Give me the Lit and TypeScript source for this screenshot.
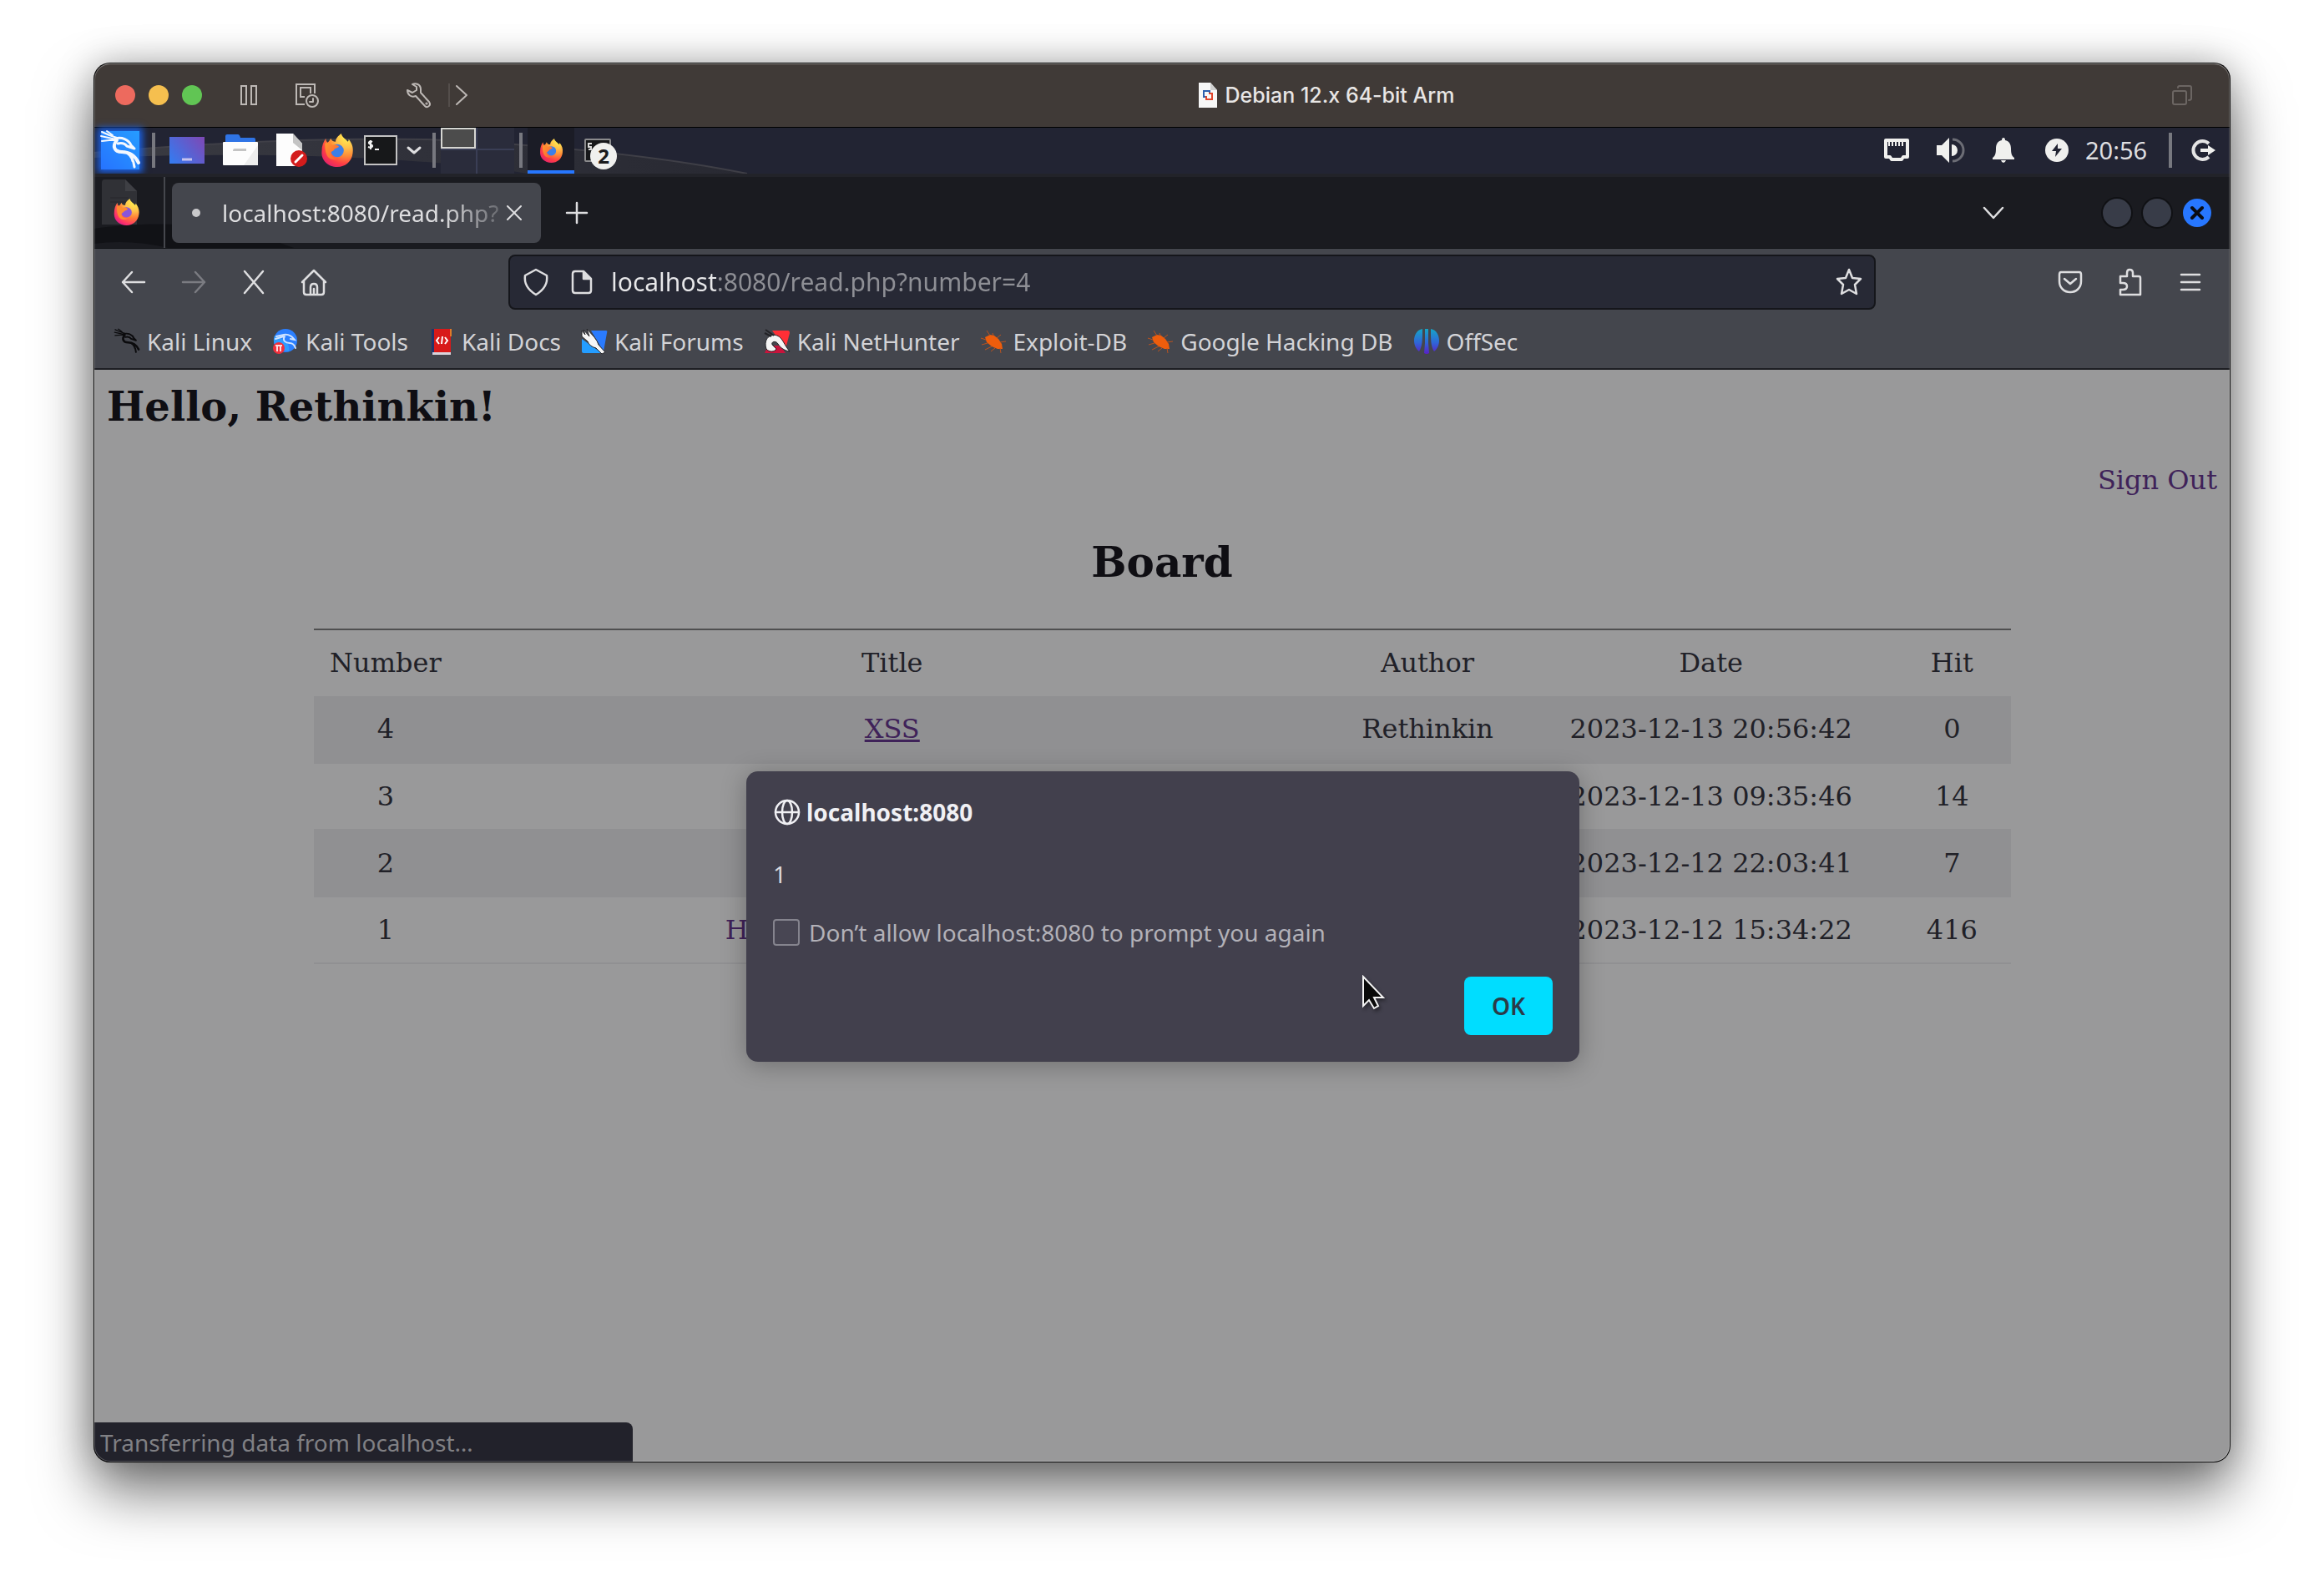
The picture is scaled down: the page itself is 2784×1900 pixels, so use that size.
import { LitElement, html, css, svg } from "lit";
import { customElement } from "lit/decorators.js";

const line = (w: number, h: number, body: unknown, sw = 2) => html`<svg
  class="ic" width=${w} height=${h} viewBox="0 0 ${w} ${h}" fill="none"
  stroke="currentColor" stroke-width=${sw} stroke-linecap="round" stroke-linejoin="round"
  aria-hidden="true">${body}</svg>`;

const dragon = svg`
  <path d="M1 1 L10 5 L19 8 M0 6 L9 8 L18 10 M1 12 L10 11 L18 11 M7 0 L14 5" stroke-width="2"/>
  <path d="M17 9 C25 7 33 10 36 17 L40 21 L31 18 C28 14 24 14 20 15" stroke-width="3"/>
  <path d="M19 11 C13 18 16 25 25 25 C34 25 41 30 45 38" stroke-width="4"/>
  <path d="M31 26 C37 30 39 35 40 43 M36 29 L38 36" stroke-width="3"/>`;

const firefox = (size: number, id: string, core: string) => html`<svg class="ic" width=${size} height=${size} viewBox="0 0 40 41" aria-hidden="true">
  <defs>
    <radialGradient id="${id}a" cx="0.8" cy="0.1" r="1.05">
      <stop offset="0" stop-color="#fff44f"/><stop offset="0.3" stop-color="#ffc24a"/>
      <stop offset="0.55" stop-color="#ff8a36"/><stop offset="0.78" stop-color="#ff3d45"/><stop offset="1" stop-color="#e0206f"/>
    </radialGradient>
    <linearGradient id="${id}b" x1="0" y1="0" x2="1" y2="1">
      <stop offset="0" stop-color="#ff9a2e"/><stop offset="1" stop-color="#ff5a36"/>
    </linearGradient>
  </defs>
  <path fill="url(#${id}a)" d="M25 0 C26 5 30 6 33 10 C34 9 34 8 34 7 C38 12 40 17 39 24 C38 34 30 41 20 41 C9 41 0 33 1 22 C1 15 3 10 6 6 C6 9 7 10 8 11 C10 10 11 8 12 6 C13 9 15 10 18 10 C18 6 21 3 25 0 Z"/>
  <circle cx="20" cy="21" r="8" fill=${core}/>
  <path fill="url(#${id}b)" d="M5 12 C9 10 12 12 14 14 C17 13 20 14 22 16 C21 18 17 18 16 20 C15 22 12 22 12 24 C13 29 18 31 22 30 C17 34 9 32 7 26 C5 21 5 16 5 12 Z"/>
</svg>`;

const spider = html`<svg class="ic" width="32" height="32" viewBox="0 0 32 32" aria-hidden="true">
  <path d="M6 11 L12 8 L17 9 L22 13 L26 19 L27 25 L21 25 L14 22 L8 17 Z" fill="#ee5d0c"/>
  <path d="M12 9 L8 3 M16 9 L15 6 M20 12 L25 8 M24 17 L31 16 M7 14 L1 12 M9 18 L2 20 M14 22 L6 26 M18 24 L13 28 M24 24 L25 30" stroke="#b9521f" stroke-width="1" fill="none"/>
</svg>`;

const bookmarks = [
  { label: "Kali Linux", icon: html`<svg class="ic" width="32" height="32" viewBox="-2 -2 50 50" fill="none" stroke="#0b0b0d" stroke-linecap="round" stroke-linejoin="round" aria-hidden="true">${dragon}</svg>` },
  { label: "Kali Tools", icon: html`<svg class="ic" width="32" height="32" viewBox="0 0 32 32" fill="none" aria-hidden="true">
      <circle cx="16" cy="15" r="14" fill="#2a7fff"/><path d="M3 9 A14 14 0 0 0 8 26 L20 28 A14 14 0 0 0 14 14 Z" fill="#2e9bff"/>
      <path d="M5 10 L14 8 M4 13 L14 10 M14 8 C20 7 24 10 27 14 L22 13 M15 10 C12 15 16 18 21 18 C25 18 27 21 28 24" stroke="#cfe3ff" stroke-width="2" stroke-linecap="round"/>
      <circle cx="8" cy="24" r="7" fill="#f0303c"/><path d="M4 21 H12 M6 21 V28 M10 21 V28" stroke="#ffd9dc" stroke-width="2"/>
    </svg>` },
  { label: "Kali Docs", icon: html`<svg class="ic" width="32" height="32" viewBox="0 0 32 32" fill="none" aria-hidden="true">
      <path d="M4 1 H7 V31 H4 Z" fill="#24336b"/><path d="M7 1 H27 V29 H7 Z" fill="#d81a1a"/><path d="M26 1 H28 V10 H26 Z" fill="#e07a28"/>
      <path d="M5 29 H27 V32 H5 Z" fill="#d8d4dc"/>
      <path d="M13 11 L10 15 L13 19 M17 10 L16 19 M20 11 L23 15 L20 19" stroke="#fff" stroke-width="2"/>
    </svg>` },
  { label: "Kali Forums", icon: html`<svg class="ic" width="32" height="32" viewBox="0 0 32 32" fill="none" aria-hidden="true">
      <path d="M12 3 H30 Q32 3 31 6 L27 28 Z" fill="#2a7bff"/><path d="M1 13 L25 30 H3 Q1 30 1 28 Z" fill="#249dff"/>
      <path d="M1 3 L5 8 L3 2 L10 10 L7 1 L16 11 Q20 16 21 20 L29 29 L25 31 L18 24 Q10 22 8 16 L1 10 Z" fill="#f6f6f6" stroke="#26262a" stroke-width="1"/>
    </svg>` },
  { label: "Kali NetHunter", icon: html`<svg class="ic" width="32" height="32" viewBox="0 0 32 32" fill="none" aria-hidden="true">
      <path d="M10 3 H29 Q31 3 31 6 L26 25 Z" fill="#ff2f36"/><path d="M1 30 L5 21 H20 L26 30 Z" fill="#c8143c"/>
      <path d="M3 25 C-1 13 8 6 16 9 C23 12 24 20 31 28 C25 27 20 24 17 19 C14 14 7 17 11 21 L15 25 C13 29 6 29 3 25 Z" fill="#f4f4f4" stroke="#222226" stroke-width="1"/>
      <path d="M2 2 L12 9 M1 6 L9 10" stroke="#222226" stroke-width="2"/>
    </svg>` },
  { label: "Exploit-DB", icon: spider },
  { label: "Google Hacking DB", icon: spider },
  { label: "OffSec", icon: html`<svg class="ic" width="32" height="32" viewBox="0 0 32 32" aria-hidden="true">
      <defs><linearGradient id="os" x1="0" y1="0" x2="0" y2="1" gradientUnits="objectBoundingBox"><stop offset="0" stop-color="#16a6c6"/><stop offset="0.55" stop-color="#2f66d8"/><stop offset="1" stop-color="#5a1fc8"/></linearGradient></defs>
      <path fill="url(#os)" d="M11 1 C4 2 1 9 1 15 C1 21 4 26 7 28 C11 22 11 14 11 1 Z M21 1 C28 2 31 9 31 15 C31 21 28 26 25 28 C21 22 21 14 21 1 Z M14 1 H18 V18 L19 30 Q16 32 13 30 L14 18 Z"/>
    </svg>` },
];

const posts = [
  { n: 4, title: "XSS", author: "Rethinkin", date: "2023-12-13 20:56:42", hit: 0 },
  { n: 3, title: "", author: "", date: "2023-12-13 09:35:46", hit: 14 },
  { n: 2, title: "", author: "", date: "2023-12-12 22:03:41", hit: 7 },
  { n: 1, title: "H", author: "", date: "2023-12-12 15:34:22", hit: 416 },
];

@customElement("app-root")
export class AppRoot extends LitElement {
  static styles = css`
    :host { display: block; background: #fff; }
    * { box-sizing: border-box; }
    button { background: none; border: 0; padding: 0; margin: 0; color: inherit; font: inherit; display: flex; align-items: center; justify-content: center; flex: none; }
    .ic { display: block; flex: none; overflow: visible; }
    .desk { min-height: 100vh; padding: 75px 112px 148px; display: flex; }
    .window {
      position: relative; flex: 1; min-width: 0; display: flex; flex-direction: column; border-radius: 20px;
      box-shadow: 0 36px 68px rgba(0,0,0,.52), 0 0 44px rgba(0,0,0,.26);
      font-family: "Noto Sans", "Open Sans", sans-serif; color: #dedee0;
    }
    .window::after { content: ""; position: absolute; inset: 0; border-radius: 20px; pointer-events: none;
      box-shadow: inset 0 0 0 1px #0a0a0a, inset 0 0 0 2px rgba(255,255,255,.24), inset 0 2px 1px rgba(255,255,255,.24); }

    .titlebar { height: 78px; background: #403a37; border-bottom: 1px solid #000; border-radius: 20px 20px 0 0; display: flex; align-items: center; color: #bdb8b5; padding-left: 26px; }
    .lights { display: flex; gap: 16px; margin-right: 21px; }
    .light { width: 24px; height: 24px; border-radius: 50%; }
    .red { background: #ed6a5e; } .amber { background: #f5bf4f; } .green { background: #61c554; }
    .tool { width: 70px; height: 48px; }
    .settings { margin-left: 64px; }
    .tick { width: 2px; height: 28px; background: #544e4b; }
    .more { width: 28px; height: 48px; margin-right: 19px; }
    .title { flex: 1; display: flex; align-items: center; justify-content: center; gap: 10px; font: 500 25px/32px Inter, "Liberation Sans", sans-serif; color: #e8e6e5; margin: 0; }
    .restore { width: 80px; height: 48px; padding-right: 36px; color: #6c6663; }

    .panel { position: relative; height: 55px; padding-bottom: 2px; background: #222433; display: flex; align-items: center; }
    .streak { position: absolute; left: 0; top: 0; }
    .panel > button, .panel > .pager, .panel > .rule, .panel > .clock { position: relative; }
    .rule { width: 4px; height: 42px; background: #77787f; margin: 0 6px; flex: none; }
    .w28 { width: 28px; padding-right: 4px; } .w48 { width: 48px; } .w56 { width: 56px; } .w60 { width: 60px; } .w64 { width: 64px; }
    .panel > button { height: 53px; }
    .kali { width: 46px; height: 46px; background: linear-gradient(45deg,#2673ff,#269cff); box-shadow: 0 0 8px 4px #1b5fe0; display: flex; }
    .pager { display: grid; align-self: flex-start; flex: none; grid-template-columns: 42px 1fr; grid-template-rows: 25px 1fr; gap: 2px; width: 88px; height: 55px; background: #3a3e55; }
    .pager > * { background: #2a2c3b; }
    .pager > .here { background: #4c4c4c; border: 2px solid #d6d6d2; }
    .panel > .running { align-self: flex-start; height: 55px; background: #1b1c26; border-bottom: 4px solid #2777ff; padding-top: 4px; }
    .badge { position: absolute; left: 19px; top: 18px; width: 32px; height: 32px; border-radius: 50%; background: #f0f0ee; color: #1b1b1d; font-weight: 700; font-size: 24px; line-height: 32px; text-align: center; }
    .grow { flex: 1; }
    .clock { width: 96px; font-size: 29px; line-height: 40px; padding-left: 2px; }

    .tabs { position: relative; height: 90px; background: #1a1b20; border-top: 4px solid #222329; border-bottom: 1px solid #101115; display: flex; align-items: center; }
    .app { width: 86px; align-self: stretch; border-right: 2px solid #45474d; padding: 3px 0 0 10px; position: relative; }
    .tab { position: relative; width: 442px; height: 72px; margin-left: 8px; border-radius: 8px; background: #44464d; display: flex; align-items: center; padding: 0 22px 0 24px; }
    .dot { width: 10px; height: 10px; border-radius: 50%; background: #c9c9cb; margin-right: 26px; flex: none; }
    .tabname { flex: 1; min-width: 0; white-space: nowrap; font-size: 28px; line-height: 40px;
      mask-image: linear-gradient(90deg,#000 78%, transparent 104%); }
    .tab button { width: 20px; height: 40px; }
    .newtab { width: 86px; height: 72px; }
    .alltabs { width: 72px; height: 72px; margin-right: 88px; }
    .wm { width: 48px; height: 48px; }
    .disc { width: 34px; height: 34px; border-radius: 50%; background: #383c48; box-shadow: 0 0 0 2px #101114; display: flex; }
    .close .disc { background: #2777ff; box-shadow: none; color: #0b0d12; }
    .controls { display: flex; margin-right: 16px; }

    .nav { height: 80px; background: #44464d; display: flex; align-items: center; padding: 0 12px; }
    .nav > button { width: 72px; height: 64px; }
    .nav > .off { color: #7b7c82; }
    .url { flex: 1; min-width: 0; height: 66px; margin: 0 197px; background: #272935; border: 2px solid #15161b; border-radius: 8px; display: flex; align-items: center; padding: 0 14px 0 16px; }
    .url svg + svg { margin-left: 28px; }
    .url input { flex: 1; min-width: 0; margin: 0 0 0 23px; padding: 0; border: 0; outline: 0; height: 44px; font: 30px/44px "Noto Sans", sans-serif; color: transparent;
      background: linear-gradient(90deg,#e8e8ea 0 127px,#8e8f95 127px); -webkit-background-clip: text; background-clip: text; }

    .marks { height: 65px; background: #44464d; border-bottom: 2px solid #1d1e23; display: flex; align-items: center; gap: 24px; padding: 0 24px 2px; font-size: 28px; line-height: 40px; }
    .marks a { color: #d3d3d6; text-decoration: none; display: flex; align-items: center; gap: 8px; white-space: nowrap; }

    .page { position: relative; flex: 1; background: #99999a; border-radius: 0 0 20px 20px; padding: 16px 16px 32px; font: 32px/37px "DejaVu Serif", serif; color: #212128; }
    h1, h2 { margin: 0; font-size: 48px; line-height: 56px; font-weight: 700; color: #0f0e13; }
    .out { display: block; text-align: right; margin: 42px 0 52px; }
    .out a { text-decoration: none; }
    .page a { color: #3f2259; }
    h2 { text-align: center; margin-bottom: 51px; font-size: 50px; }
    table { width: 2033px; max-width: 100%; margin: 0 auto; border-collapse: collapse; table-layout: fixed; border-top: 2px solid #4f4f50; text-align: center; }
    th, td { font-weight: 400; padding: 0; height: 80px; border-bottom: 2px solid #909092; line-height: 37px; white-space: nowrap; overflow: hidden; }
    .c1 { width: 8.5%; } .c2 { width: 51.2%; } .c3 { width: 11.9%; } .c4 { width: 21.5%; }
    thead th { border-bottom: 0; }
    tbody tr:nth-child(odd) { background: #909092; }
    .long { display: inline-block; width: 400px; text-align: left; text-decoration: none; }

    .dialog { position: absolute; top: 481px; left: 50%; translate: -50% 0; margin-left: 1px; width: 998px; max-width: 90%; padding: 32px; background: #42404d; border-radius: 14px;
      box-shadow: 0 4px 30px rgba(0,0,0,.28); font: 28px/34px "Noto Sans", sans-serif; color: #d9d9de; display: flex; flex-direction: column; }
    .origin { display: flex; align-items: center; gap: 8px; font-weight: 700; color: #f0f0f4; margin: 0 0 40px 2px; }
    .dialog p { margin: 0 0 36px; }
    .check { display: flex; align-items: center; gap: 11px; margin-bottom: 36px; color: #b2b1b8; }
    .check input { appearance: none; width: 32px; height: 32px; margin: 0; border: 2px solid #85848e; border-radius: 4px; background: #484653; flex: none; }
    .dialog .ok { align-self: flex-end; width: 106px; height: 70px; border-radius: 8px; background: #00ddff; color: #2b3a48; font-weight: 600; }
    .cursor { position: absolute; left: 737px; top: 244px; filter: drop-shadow(2px 3px 2px rgba(0,0,0,.4)); }
    .status { position: absolute; left: 0; bottom: 0; width: 646px; height: 48px; background: #22222b; border-radius: 0 8px 0 20px; padding: 4px 8px; font: 28px/40px "Noto Sans", sans-serif; color: #808084; }
  `;

  private titlebar() {
    return html`<header class="titlebar">
      <div class="lights"><span class="light red"></span><span class="light amber"></span><span class="light green"></span></div>
      <button class="tool" aria-label="Pause">${line(22, 26, svg`<path stroke-linejoin="miter" d="M2 2 H8 V24 H2 Z M14 2 H20 V24 H14 Z"/>`)}</button>
      <button class="tool" aria-label="Snapshots">${line(28, 30, svg`<path stroke-linecap="butt" stroke-linejoin="miter" d="M11 26 H1 V2 H23 V13 M11 17 H6 V6 H18 V11 L18 13"/><circle cx="20" cy="22" r="7"/><path d="M21 19 V23 H17"/>`)}</button>
      <button class="tool settings" aria-label="Settings">${line(30, 30, svg`<path d="M7 2 C11 0 17 2 17 8 L17 12 L27 23 C30 27 25 31 22 28 L11 16 C6 18 1 15 1 9 L7 12 L12 9 L12 5 Z"/><circle cx="24" cy="25" r="0.6"/>`)}</button>
      <span class="tick"></span>
      <button class="more" aria-label="More">${line(14, 24, svg`<path d="M1 1 L13 12 L1 23"/>`)}</button>
      <div class="title">
        <svg class="ic" width="22" height="30" viewBox="0 0 22 30" aria-hidden="true">
          <path d="M0 0 H14 L22 9 V30 H0 Z" fill="#f7f7f7"/><path d="M14 0 L22 9 H14 Z" fill="#cfcfcf"/>
          <path d="M9 17 H6 V10 H13 V13" stroke="#2c5fae" stroke-width="2" fill="none"/><path d="M12 13 H16 V20 H9 V16" stroke="#e0452c" stroke-width="2" fill="none"/>
        </svg>
        <span>Debian 12.x 64-bit Arm</span>
      </div>
      <button class="restore" aria-label="Full screen">${line(24, 24, svg`<rect x="1" y="7" width="16" height="16" rx="2"/><path d="M7 3 V3 Q7 1 9 1 H21 Q23 1 23 3 V16 Q23 18 20 18"/>`)}</button>
    </header>`;
  }

  private panel() {
    return html`<nav class="panel" aria-label="Desktop panel">
      <svg class="streak" width="800" height="55" viewBox="0 0 800 55" aria-hidden="true">
        <defs><linearGradient id="st" x1="0" x2="1" y1="0" y2="0"><stop offset="0" stop-color="#3a3b42"/><stop offset="0.5" stop-color="#30313a"/><stop offset="1" stop-color="#282932"/></linearGradient></defs>
        <path d="M0 30 C160 16 300 12 400 14 C540 20 680 34 783 55 H520 C430 40 250 26 0 36 Z" fill="url(#st)"/>
        <path d="M0 30 C160 16 300 12 400 14 C540 20 680 34 783 55" fill="none" stroke="#3f3f47" stroke-width="2"/>
      </svg>
      <button class="w64" aria-label="Applications"><span class="kali"><svg class="ic" width="46" height="46" viewBox="0 0 46 46" fill="none" stroke="#f4f8ff" stroke-linecap="round" stroke-linejoin="round" aria-hidden="true">${dragon}</svg></span></button>
      <span class="rule"></span>
      <button class="w64" aria-label="Show desktop"><svg class="ic" width="42" height="32" viewBox="0 0 42 32" aria-hidden="true">
        <defs><linearGradient id="sd" x1="0" y1="0.8" x2="1" y2="0.2"><stop offset="0" stop-color="#3779ee"/><stop offset="1" stop-color="#7a4bb8"/></linearGradient></defs>
        <rect width="42" height="32" fill="url(#sd)"/><path d="M15 27 H27" stroke="#c8c4ee" stroke-width="3"/></svg></button>
      <button class="w64" aria-label="Files"><svg class="ic" width="42" height="38" viewBox="0 0 42 38" aria-hidden="true">
        <path d="M3 12 V2 Q3 0 5 0 H18 Q20 0 21 4 H37 Q39 4 39 6 V12 Z" fill="#2f74e6"/><rect y="9" width="42" height="28" rx="1" fill="#fdfdfd"/><path d="M42 13 V37 H25 Z" fill="#ededed"/><path d="M14 17 H28 V20 H12 Q12 17 14 17 Z" fill="#c4c4c4"/></svg></button>
      <button class="w60" aria-label="Text editor"><svg class="ic" width="38" height="42" viewBox="0 0 38 42" aria-hidden="true">
        <path d="M0 1 H20 L31 13 V40 H0 Z" fill="#fdfdfd"/><path d="M20 1 L31 13 V21 L20 12 Z" fill="#c4c4c4"/><circle cx="27" cy="31" r="10" fill="#d31c1c"/><path d="M23 35 L31 27" stroke="#fff" stroke-width="3" stroke-linecap="round"/></svg></button>
      <button class="w48" aria-label="Firefox">${firefox(40, "fa", "#3d7fe8")}</button>
      <button class="w56" aria-label="Terminal"><svg class="ic" width="40" height="36" viewBox="0 0 40 36" aria-hidden="true">
        <rect x="1" y="1" width="38" height="34" fill="#17181a" stroke="#c3c3c3" stroke-width="2"/>
        <path d="M10 8 C6 6 4 10 8 11 C12 12 10 16 5 14 M8 6 V17 M13 17 H18" fill="none" stroke="#f2f2f2" stroke-width="2"/></svg></button>
      <button class="w28" aria-label="More terminals">${line(16, 10, svg`<path d="M1 2 L8 8 L15 2"/>`, 3)}</button>
      <span class="rule"></span>
      <div class="pager"><span class="here"></span><span></span><span></span><span></span></div>
      <span class="rule"></span>
      <button class="w56 running" aria-label="Firefox window">${firefox(29, "fb", "#3d7fe8")}</button>
      <button class="w56" aria-label="Terminal windows"><svg class="ic" width="32" height="28" viewBox="0 0 32 28" aria-hidden="true"><rect x="1" y="1" width="30" height="26" rx="1" fill="#17181a" stroke="#8b8b8d" stroke-width="2"/><path d="M9 6 H5 V10 H8 V13 H5" fill="none" stroke="#d8d8d8" stroke-width="2"/></svg><span class="badge">2</span></button>
      <span class="grow"></span>
      <button class="w64" aria-label="Network"><svg class="ic" width="30" height="28" viewBox="0 0 30 28" fill="none" aria-hidden="true"><path d="M2 2 H28 V22 H23 L21 25 H9 L7 22 H2 Z" stroke="#f0f0ee" stroke-width="4" stroke-linejoin="round"/><path d="M6 3 V9 M10 3 V9 M14 3 V9 M18 3 V9 M22 3 V9" stroke="#f0f0ee" stroke-width="2"/></svg></button>
      <button class="w64" aria-label="Volume"><svg class="ic" width="32" height="30" viewBox="0 0 32 30" fill="none" aria-hidden="true"><path d="M0 9 H6 L15 0 V30 L6 21 H0 Z" fill="#f0f0ee"/><path d="M18 8 A7 7 0 0 1 18 22 Z" fill="#f0f0ee"/><path d="M19 2 A13 13 0 0 1 19 28" stroke="#6c6d75" stroke-width="3"/></svg></button>
      <button class="w64" aria-label="Notifications"><svg class="ic" width="26" height="30" viewBox="0 0 26 30" aria-hidden="true"><path d="M13 0 Q15 0 15 3 C20 4 22 8 22 13 C22 19 23 22 26 24 V26 H0 V24 C3 22 4 19 4 13 C4 8 6 4 11 3 Q11 0 13 0 Z M10 27 H16 Q15 30 13 30 Q11 30 10 27 Z" fill="#f0f0ee"/></svg></button>
      <button class="w64" aria-label="Power"><svg class="ic" width="28" height="28" viewBox="0 0 28 28" aria-hidden="true"><circle cx="14" cy="14" r="14" fill="#f0f0ee"/><path d="M15 6 L8 15 H13 L12 22 L20 12 H15 Z" fill="#222433"/></svg></button>
      <time class="clock">20:56</time>
      <span class="rule"></span>
      <button class="w64" aria-label="Log out"><svg class="ic" width="28" height="26" viewBox="0 0 28 26" fill="none" aria-hidden="true"><path d="M20 5 A11 11 0 1 0 20 21" stroke="#e4e4e4" stroke-width="4"/><path d="M10 11 H19 V7 L28 13 L19 19 V15 H10 Z" fill="#f0f0ee"/></svg></button>
    </nav>`;
  }

  private tabs() {
    return html`<div class="tabs">
      <svg class="streak" width="260" height="85" viewBox="0 0 260 85" aria-hidden="true"><path d="M0 62 C60 54 150 50 240 85 H90 C60 78 30 76 0 80 Z" fill="#111216"/></svg>
      <div class="app"><svg class="ic" width="56" height="58" viewBox="0 0 56 58" aria-hidden="true">
        <path d="M0 4 Q0 0 3 0 H28 L42 14 V54 H0 Z" fill="#303136"/><path d="M28 0 L42 14 H28 Z" fill="#3e3f44"/><path d="M10 22 H32 M10 27 H32" stroke="#26272b" stroke-width="1"/>
        <g transform="translate(14 23)">${this.smallFox()}</g></svg></div>
      <div class="tab"><span class="dot"></span><span class="tabname">localhost:8080/read.php?</span>
        <button aria-label="Close tab">${line(18, 18, svg`<path d="M1 1 L17 17 M17 1 L1 17"/>`)}</button></div>
      <button class="newtab" aria-label="New tab">${line(24, 24, svg`<path d="M12 0 V24 M0 12 H24"/>`, 2.5)}</button>
      <span class="grow"></span>
      <button class="alltabs" aria-label="List all tabs">${line(24, 14, svg`<path d="M1 1 L12 13 L23 1"/>`, 2.5)}</button>
      <div class="controls">
        <button class="wm" aria-label="Minimize"><span class="disc"></span></button>
        <button class="wm" aria-label="Maximize"><span class="disc"></span></button>
        <button class="wm close" aria-label="Close"><span class="disc"><svg class="ic" width="34" height="34" viewBox="0 0 34 34" fill="none" stroke="currentColor" stroke-width="4" stroke-linecap="round" aria-hidden="true"><path d="M11 11 L23 23 M23 11 L11 23"/></svg></span></button>
      </div>
    </div>`;
  }

  private smallFox() {
    return svg`<defs><radialGradient id="sf" cx="0.8" cy="0.1" r="1.05"><stop offset="0" stop-color="#fff44f"/><stop offset="0.35" stop-color="#ffc24a"/><stop offset="0.6" stop-color="#ff7a36"/><stop offset="0.85" stop-color="#ff3268"/><stop offset="1" stop-color="#d81a8c"/></radialGradient></defs>
      <g transform="scale(0.78)"><path fill="url(#sf)" d="M25 0 C26 5 30 6 33 10 C34 9 34 8 34 7 C38 12 40 17 39 24 C38 34 30 41 20 41 C9 41 0 33 1 22 C1 15 3 10 6 6 C6 9 7 10 8 11 C10 10 11 8 12 6 C13 9 15 10 18 10 C18 6 21 3 25 0 Z"/>
      <circle cx="20" cy="21" r="8" fill="#8a55d8"/><path fill="#ff8a30" d="M5 12 C9 10 12 12 14 14 C17 13 20 14 22 16 C21 18 17 18 16 20 C15 22 12 22 12 24 C13 29 18 31 22 30 C17 34 9 32 7 26 C5 21 5 16 5 12 Z"/></g>`;
  }

  private toolbar() {
    return html`<div class="nav">
      <button aria-label="Back">${line(28, 24, svg`<path d="M12 0 L1 12 L12 24 M1 12 H27"/>`, 2.5)}</button>
      <button class="off" aria-label="Forward">${line(28, 24, svg`<path d="M16 0 L27 12 L16 24 M27 12 H1"/>`, 2.5)}</button>
      <button aria-label="Stop">${line(24, 26, svg`<path d="M1 0 L23 26 M23 0 L1 26"/>`, 2.5)}</button>
      <button aria-label="Home">${line(30, 32, svg`<path d="M1 16 L15 2 L29 16 M3 15 V28 Q3 31 6 31 H24 Q27 31 27 28 V15 M11 31 V22 Q11 18 15 18 Q19 18 19 22 V31 M15 24 V31"/>`, 2.5)}</button>
      <div class="url">
        ${line(30, 32, svg`<path d="M15 1 L28 8 Q30 22 15 31 Q0 22 2 8 Z"/>`, 2.5)}
        ${line(24, 28, svg`<path d="M4 1 H14 L23 10 V24 Q23 27 20 27 H4 Q1 27 1 24 V4 Q1 1 4 1 Z"/><path d="M14 2 V10 H22 Z" fill="currentColor"/>`, 2.5)}
        <input aria-label="Address" value="localhost:8080/read.php?number=4" />
        <button aria-label="Bookmark this page">${line(32, 32, svg`<path d="M16 1 L20 11 L30 12 L23 19 L25 30 L16 25 L7 30 L9 19 L2 12 L12 11 Z"/>`, 2.5)}</button>
      </div>
      <button aria-label="Save to Pocket">${line(30, 28, svg`<path d="M4 2 H26 Q28 2 28 5 V13 C28 21 22 26 15 26 C8 26 2 21 2 13 V5 Q2 2 4 2 Z M8 10 L15 16 L22 10"/>`, 2.5)}</button>
      <button aria-label="Extensions">${line(28, 34, svg`<path d="M2 10 H10 V6 Q10 2 13 2 Q17 2 17 6 V10 H24 Q26 10 26 12 V32 H2 V26 H5 Q10 26 10 22 Q10 18 5 18 H2 Z"/>`, 2.5)}</button>
      <button aria-label="Menu">${line(24, 20, svg`<path d="M1 1 H23 M1 10 H23 M1 19 H23"/>`, 2.5)}</button>
    </div>
    <nav class="marks" aria-label="Bookmarks">${bookmarks.map((b) => html`<a href="#">${b.icon}<span>${b.label}</span></a>`)}</nav>`;
  }

  render() {
    return html`<div class="desk"><section class="window">
      ${this.titlebar()} ${this.panel()} ${this.tabs()} ${this.toolbar()}
      <main class="page">
        <h1>Hello, Rethinkin!</h1>
        <div class="out"><a href="#">Sign Out</a></div>
        <h2>Board</h2>
        <table>
          <thead><tr><th class="c1">Number</th><th class="c2">Title</th><th class="c3">Author</th><th class="c4">Date</th><th>Hit</th></tr></thead>
          <tbody>${posts.map((p) => html`<tr><td>${p.n}</td><td>${p.title ? html`<a class=${p.n === 1 ? "long" : ""} href="#">${p.title}</a>` : ""}</td><td>${p.author}</td><td>${p.date}</td><td>${p.hit}</td></tr>`)}</tbody>
        </table>
        <form class="dialog" role="alertdialog" aria-label="localhost:8080">
          <div class="origin">${line(30, 30, svg`<circle cx="15" cy="15" r="14"/><ellipse cx="15" cy="15" rx="6" ry="14"/><path d="M1 15 H29"/>`, 2.5)}<span>localhost:8080</span></div>
          <p>1</p>
          <label class="check"><input type="checkbox" /><span>Don’t allow localhost:8080 to prompt you again</span></label>
          <button class="ok" type="button">OK</button>
          <svg class="cursor" width="28" height="42" viewBox="0 0 28 42" aria-hidden="true"><path d="M2 2 V37 L9 30 L15 40 L20 37 L15 27 H26 Z" fill="#0a0a0a" stroke="#f4f4f4" stroke-width="2"/></svg>
        </form>
        <div class="status" role="status">Transferring data from localhost…</div>
      </main>
    </section></div>`;
  }
}
